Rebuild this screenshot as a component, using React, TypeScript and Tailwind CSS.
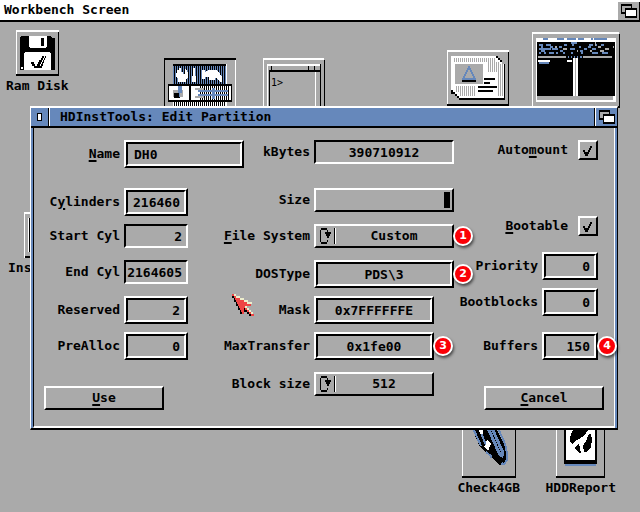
import type { ReactNode } from "react";
import clsx from "clsx";

const raised = "border-2 border-t-white border-l-white border-r-black border-b-black";
const recessed = "border-2 border-t-black border-l-black border-r-white border-b-white";

export default function App() {
  return (
    <div className="flex min-h-screen flex-col overflow-hidden bg-[#aaaaaa] font-['DejaVu_Sans_Mono',monospace] text-[13px] leading-4 font-bold text-black">
      <header className="flex h-[22px] items-center justify-between border-b-2 border-black bg-white pl-1">
        <h1>Workbench Screen</h1>
        <button
          aria-label="Screen depth"
          className="mt-0.5 flex h-[18px] w-[22px] items-center justify-center border-r border-black bg-[#aaaaaa]"
        >
          <DepthIcon />
        </button>
      </header>

      <main className="relative flex-1 pt-21">
        <DesktopIcons />
        <PartitionWindow />
        <Pointer />
      </main>
    </div>
  );
}

function PartitionWindow() {
  return (
    <section className="relative z-10 mr-[22px] ml-[30px] border-t-2 border-r border-b-2 border-l border-t-white border-r-black border-b-black border-l-white bg-[#6688bb]">
      <div className="flex h-5 items-stretch border-b-2 border-black">
        <button
          aria-label="Close"
          className="flex w-[18px] items-center justify-center border-r border-black"
        >
          <span className="h-2 w-[5px] border border-black bg-white" />
        </button>
        <h2 className="flex flex-1 items-center border-r border-l border-r-black border-l-white pl-2.5">
          HDInstTools: Edit Partition
        </h2>
        <button
          aria-label="Window depth"
          className="flex w-[22px] items-center justify-center border-l border-white"
        >
          <DepthIcon />
        </button>
      </div>

      <form
        onSubmit={(e) => e.preventDefault()}
        className="mx-0.5 grid grid-cols-[144px_1fr_144px] border-r border-b-2 border-l border-r-white border-b-white border-l-black bg-[#aaaaaa] px-2.5 pt-3 pb-4"
      >
        <div className="flex flex-col">
          <Row className="h-12" label={<><Key>N</Key>ame</>} id="name">
            <TextField id="name" value="DH0" className="w-[120px]" />
          </Row>
          <Row className="h-9" label={<>C<Key>y</Key>linders</>} id="cylinders">
            <TextField id="cylinders" value="216460" className="w-16" align="right" />
          </Row>
          <Row className="h-9" label="Start Cyl" id="start">
            <ReadOnly id="start" value="2" className="w-16" align="right" />
          </Row>
          <Row className="h-9" label="End Cyl" id="end">
            <ReadOnly id="end" value="2164605" className="w-16" align="right" />
          </Row>
          <Row className="h-9" label="Reserved" id="reserved">
            <TextField id="reserved" value="2" className="w-16" align="right" />
          </Row>
          <Row className="h-9" label="PreAlloc" id="prealloc">
            <TextField id="prealloc" value="0" className="w-16" align="right" />
          </Row>
          <button className={clsx("mt-auto h-6 w-[120px]", raised)}>
            <Key>U</Key>se
          </button>
        </div>

        <div className="flex flex-col pr-1.5 pb-3.5">
          <Row className="h-12" label="kBytes" id="kbytes" wide>
            <ReadOnly id="kbytes" value="390710912" className="w-[140px]" align="center" />
          </Row>
          <Row className="h-9" label="Size" id="size" wide>
            <div className={clsx("flex h-6 w-[140px] justify-end py-0.5 pr-0.5", raised)}>
              <input
                id="size"
                type="range"
                defaultValue="100"
                className="h-4 w-full appearance-none bg-transparent [&::-webkit-slider-thumb]:h-4 [&::-webkit-slider-thumb]:w-1.5 [&::-webkit-slider-thumb]:appearance-none [&::-webkit-slider-thumb]:bg-black"
              />
            </div>
          </Row>
          <Row className="h-9" label={<><Key>F</Key>ile System</>} id="fs" wide>
            <Cycle id="fs" options={["Custom"]} className="w-[140px]" note={1} />
          </Row>
          <Row className="h-9" label="DOSType" id="dostype" wide>
            <TextField id="dostype" value="PDS\3" className="w-[140px]" align="center" note={2} />
          </Row>
          <Row className="h-9" label="Mask" id="mask" wide>
            <TextField id="mask" value="0x7FFFFFFE" className="w-[120px]" align="center" />
          </Row>
          <Row className="h-10" label="MaxTransfer" id="maxtransfer" wide>
            <TextField id="maxtransfer" value="0x1fe00" className="w-[120px]" align="center" note={3} />
          </Row>
          <Row className="h-6" label="Block size" id="blocksize" wide>
            <Cycle id="blocksize" options={["512"]} className="w-[120px]" />
          </Row>
        </div>

        <div className="flex flex-col">
          <div className="flex flex-col pr-1.5">
            <Row className="h-19" label={<>Auto<Key>m</Key>ount</>} id="automount" gap="gap-2.5">
              <Tick id="automount" />
            </Row>
            <Row className="h-9" label={<><Key>B</Key>ootable</>} id="bootable" gap="gap-2.5">
              <Tick id="bootable" />
            </Row>
            <Row className="h-9" label="Priority" id="priority">
              <TextField id="priority" value="0" className="w-14" align="right" />
            </Row>
            <Row className="h-11" label="Bootblocks" id="bootblocks">
              <TextField id="bootblocks" value="0" className="w-14" align="right" />
            </Row>
            <Row className="h-7" label="Buffers" id="buffers">
              <TextField id="buffers" value="150" className="w-14" align="right" note={4} />
            </Row>
          </div>
          <button className={clsx("mt-auto h-6 w-[120px] self-end", raised)}>
            <Key>C</Key>ancel
          </button>
        </div>
      </form>
    </section>
  );
}

// underlined keyboard shortcut letter
function Key({ children }: { children: ReactNode }) {
  return <span className="underline decoration-2 underline-offset-2">{children}</span>;
}

function Row({
  id,
  label,
  className,
  gap = "gap-1",
  wide,
  children,
}: {
  id: string;
  label: ReactNode;
  className: string;
  gap?: string;
  wide?: boolean;
  children: ReactNode;
}) {
  // the wide column keeps all its fields on one left edge
  return (
    <div className={clsx("flex items-start", className, !wide && id !== "name" && "justify-end")}>
      <div className={clsx("flex items-center", gap, wide && "w-full")}>
        <label
          htmlFor={id}
          className={clsx("text-right whitespace-nowrap", wide && "flex-1", id === "name" && "w-19")}
        >
          {label}
        </label>
        {wide ? <div className="w-[140px]">{children}</div> : children}
      </div>
    </div>
  );
}

type Align = "left" | "right" | "center";

const aligns: Record<Align, string> = {
  left: "pl-1.5 text-left",
  right: "pr-1 text-right",
  center: "text-center",
};

function TextField({
  id,
  value,
  className,
  align = "left",
  note,
}: {
  id: string;
  value: string;
  className: string;
  align?: Align;
  note?: number;
}) {
  return (
    <div className={clsx("relative h-7 shrink-0", raised, className)}>
      <input
        id={id}
        defaultValue={value}
        className={clsx("block h-6 w-full outline-none", recessed, aligns[align])}
      />
      {note && <Note n={note} />}
    </div>
  );
}

function ReadOnly({
  id,
  value,
  className,
  align,
}: {
  id: string;
  value: string;
  className: string;
  align: Align;
}) {
  return (
    <input
      id={id}
      readOnly
      value={value}
      className={clsx("block h-6 outline-none", recessed, aligns[align], className)}
    />
  );
}

function Cycle({
  id,
  options,
  className,
  note,
}: {
  id: string;
  options: string[];
  className: string;
  note?: number;
}) {
  return (
    <div className={clsx("relative flex h-6 items-center", raised, className)}>
      <svg width="20" height="16" viewBox="0 0 20 16" shapeRendering="crispEdges" className="shrink-0">
        <path d="M5 0h6v2h-6zM4 2h1v12h-1zM5 14h6v2h-6zM11 12h1v2h-1zM11 2h1v4h-1z" />
        <path d="M9 4h6v2h-1v2h-1v2h-2v-2h-1v-2h-1z" />
        <path d="M18 0h1v16h-1z" />
        <path d="M19 0h1v16h-1z" fill="#fff" />
      </svg>
      <select id={id} className="h-5 w-full appearance-none text-center outline-none [text-align-last:center]">
        {options.map((o) => (
          <option key={o}>{o}</option>
        ))}
      </select>
      {note && <Note n={note} />}
    </div>
  );
}

function Tick({ id }: { id: string }) {
  return (
    <div className={clsx("relative h-5 w-5", raised)}>
      <input id={id} type="checkbox" defaultChecked className="peer block h-4 w-4 appearance-none" />
      <svg
        viewBox="0 0 16 16"
        shapeRendering="crispEdges"
        className="pointer-events-none absolute inset-0 hidden h-4 w-4 peer-checked:block"
      >
        <path d="M10 4h2v2h-2zM9 6h2v2h-2zM3 8h2v2h-2zM8 8h2v2h-2zM4 10h5v2h-5zM5 12h3v2h-3z" />
      </svg>
    </div>
  );
}

function Note({ n }: { n: number }) {
  return (
    <span className="absolute top-1/2 left-full z-10 ml-px flex h-5 w-5 -translate-y-1/2 items-center justify-center rounded-full border-2 border-white bg-[#fb0007] font-['DejaVu_Sans',sans-serif] text-[11px] leading-3 text-white shadow-[1px_2px_3px_rgba(0,0,0,0.6)]">
      {n}
    </span>
  );
}

function DepthIcon() {
  return (
    <svg width="16" height="14" viewBox="0 0 16 14" shapeRendering="crispEdges">
      <path d="M0 0h11v10h-11z" />
      <path d="M1 2h9v6h-9z" fill="#aaa" />
      <path d="M4 4h12v10h-12z" />
      <path d="M5 6h10v6h-10z" fill="#fff" />
    </svg>
  );
}

function Pointer() {
  return (
    <svg
      width="22"
      height="22"
      viewBox="0 0 22 22"
      shapeRendering="crispEdges"
      className="absolute top-[272px] left-[232px] z-20"
    >
      <path
        d="M0 0h2v2h-2zM2 2h2v2h-2zM3 4h5v2h-5zM4 6h8v2h-8zM5 8h10v2h-10zM6 10h13v2h-13zM7 12h6v2h-6zM8 14h4v2h-4zM13 14h2v2h-2zM9 16h3v2h-3zM15 16h2v2h-2zM10 18h2v2h-2zM17 18h2v2h-2zM19 20h3v2h-3z"
        fill="#ee4444"
      />
      <path
        d="M2 0h2v2h-2zM4 2h4v2h-4zM8 4h4v2h-4zM12 6h4v2h-4zM15 8h5v2h-5zM13 12h2v2h-2zM15 14h2v2h-2zM17 16h2v2h-2zM19 18h2v2h-2z"
        fill="#eeeecc"
      />
      <path d="M0 2h2v2h-2zM2 4h1v2h-1zM2 6h2v2h-2zM4 8h1v2h-1zM4 10h2v2h-2zM6 12h1v2h-1zM6 14h2v2h-2zM8 16h1v2h-1zM8 18h2v2h-2zM12 14h1v2h-1zM12 16h3v2h-3zM15 18h2v2h-2zM17 20h2v2h-2z" />
    </svg>
  );
}

function DesktopIcon({ label, className, children }: { label?: string; className: string; children: ReactNode }) {
  return (
    <figure className={clsx("absolute flex flex-col items-center", className)}>
      {children}
      {label && <figcaption className="mt-0.5 whitespace-nowrap">{label}</figcaption>}
    </figure>
  );
}

function DesktopIcons() {
  return (
    <>
      <DesktopIcon label="Ram Disk" className="top-2 left-1.5">
        <svg width="43" height="46" viewBox="0 0 43 46" shapeRendering="crispEdges">
          <Frame w={43} h={46} />
          <path d="M4 8l1-2h30l1 2h3v32h-35z" />
          <path d="M13 6h18v10l-1 2h-16l-1-2zM9 22h24l2 2v16h-27v-16z" fill="#fff" />
          <path d="M25 8h3v8h-3z" />
          <path d="M15 32h3v2h1v2h2v-2h1v-2h1v-2h2v-2h1v-2h2v2h-1v2h-1v2h-1v2h-1v2h-1v2h-5v-2h-2v-2h-1zM23 36h2v-2h1v-2h1v-2h1v-2h1v-2h1v2h-1v2h-1v3h-1v3h-1v2h-3z" />
          <path d="M5 37h2v2h-2z" fill="#fff" />
        </svg>
      </DesktopIcon>

      <DesktopIcon className="top-9 left-[164px]">
        <svg width="72" height="50" viewBox="0 0 72 50" shapeRendering="crispEdges">
          <defs>
            <pattern id="blueStripe" width="2" height="2" patternUnits="userSpaceOnUse">
              <path d="M0 0h2v2h-2z" fill="#6688bb" />
              <path d="M0 0h1v2h-1z" />
            </pattern>
            <pattern id="whiteStripe" width="2" height="2" patternUnits="userSpaceOnUse">
              <path d="M0 0h2v2h-2z" fill="#fff" />
              <path d="M0 0h1v2h-1z" />
            </pattern>
          </defs>
          <path d="M0 0h72v2h-71v48h-1z" />
          <path d="M71 2h1v48h-1z" fill="#fff" />
          <path d="M9 6h53v20h-53z" fill="url(#blueStripe)" />
          <path d="M9 6h53v2h-53z" />
          <path d="M62 6h1v20h-1zM61 44h2v6h-2z" fill="#fff" />
          <path d="M13 12h2v-2h2v4h2v2h2v-5l2 1v2h1v5l-2 2v3h-8v-3l-2-3zM29 10h2v8h1v6h-4v-6h1zM38 12h3v2l4-2h8l3 4 2 3v5h-2l-3-4h-2v2h-6v-3h-4v2h-3z" fill="#fff" />
          <path d="M4 26h64v18h-64z" />
          <path d="M5 28h20v14h-20zM27 28h9v14h-9z" fill="#fff" />
          <path d="M36 28h28v14h-28z" fill="url(#whiteStripe)" />
          <path d="M9 32h10v7h-10z" fill="#aaa" />
          <path d="M10 35h6v5h-6z" />
          <path d="M14 28h4v7h-2v4h-1v-4h-1zM34 32h30v2h-30zM34 36h30v2h-30zM48 30h3v11h-3z" fill="#6688bb" />
          <path d="M31 30h9v2h-9zM31 38h9v2h-9z" fill="#aaa" />
          <path d="M65 28h2v14h-2z" fill="#fff" />
          <path d="M9 44h52v6h-52z" fill="url(#whiteStripe)" />
        </svg>
      </DesktopIcon>

      <DesktopIcon className="top-9 left-[263px]">
        <svg width="62" height="50" viewBox="0 0 62 50" shapeRendering="crispEdges">
          <path d="M0 0h61v2h-60v48h-1zM4 6h53v2h-52v42h-1zM52 14h1v36h-1z" fill="#fff" />
          <path d="M61 2h1v48h-1zM57 6h1v44h-1zM6 12h51v2h-50v36h-1zM8 8h1v4h-1zM45 8h1v4h-1zM51 8h1v4h-1z" />
          <text x="8" y="28" fontSize="10" fontWeight="400">
            1&gt;
          </text>
        </svg>
      </DesktopIcon>

      <DesktopIcon className="top-7 right-[131px]">
        <svg width="62" height="56" viewBox="0 0 62 56" shapeRendering="crispEdges">
          <defs>
            <pattern id="greyStripe" width="2" height="2" patternUnits="userSpaceOnUse">
              <path d="M0 0h2v2h-2z" fill="#fff" />
              <path d="M1 0h1v2h-1z" fill="#aaa" />
            </pattern>
          </defs>
          <Frame w={62} h={56} />
          <path d="M49 6h2v2h2v2h2v4h3v36h-46v-2h-2v-2h-2v-2h-4v-4h50z" />
          <path d="M4 6h45v2h2v2h2v2h2v2h2v34h-45v-2h-2v-2h-2v-2h-2v-2h-2z" fill="#fff" />
          <path d="M7 8h41v4h-41zM40 12h12v10h-12zM8 36h20v10h-16v-4h-4zM50 14h6v32h-6z" fill="url(#greyStripe)" />
          <path d="M8 14h27v20h-27z" fill="#aaa" />
          <path d="M35 14h1v20h-1z" fill="#aaa" />
          <path d="M15 30h14v2h-14z" />
          <path d="M22 17l6 12h-12z" fill="none" stroke="#6688bb" strokeWidth="2" />
          <path d="M37 28h11v2h-11zM37 32h6v2h-6zM31 36h19v2h-19zM31 40h15v2h-15z" />
        </svg>
      </DesktopIcon>

      <DesktopIcon className="top-2.5 right-5">
        <svg width="88" height="76" viewBox="0 0 88 76" shapeRendering="crispEdges">
          <path d="M0 0h87v2h-86v74h-1zM4 6h80v64h-80z" fill="#fff" />
          <path d="M87 2h1v74h-2v-2h1zM5 10h78v54h-78z" />
          <path d="M11 6h5v2h-5zM25 6h7v2h-7zM35 6h9v2h-9zM46 6h6v2h-6zM59 6h2v2h-2zM62 6h13v2h-13z" fill="#6688bb" />
          <path d="M7 12h4v2h-4zM14 12h5v2h-5zM32 12h3v2h-3zM39 10h6v2h-6zM40 12h2v2h-2zM57 12h4v2h-4zM63 12h2v2h-2zM69 12h3v2h-3zM9 14h2v2h-2zM18 14h3v2h-3zM27 14h3v2h-3zM47 14h2v2h-2zM56 14h3v2h-3zM7 16h12v2h-12zM20 16h6v2h-6zM38 16h5v2h-5zM52 16h3v2h-3zM60 16h4v2h-4zM7 20h2v2h-2zM12 20h2v2h-2zM17 20h5v2h-5zM24 20h2v2h-2zM31 20h2v2h-2zM39 20h2v2h-2zM49 20h2v2h-2zM60 20h6v2h-6zM70 20h6v2h-6zM9 18h4v2h-4zM28 18h3v2h-3zM48 18h3v2h-3z" fill="#6688bb" />
          <path d="M23 14h2v2h-2zM31 16h4v2h-4zM63 10h1v4h-1zM66 14h3v2h-3zM73 16h4v2h-4zM58 18h2v2h-2zM68 18h4v2h-4zM81 14h1v2h-1zM45 18h1v2h-1zM6 24h28v2h-28zM51 24h29v2h-29z" fill="#aaa" />
          <path d="M36 24h1v2h-1zM39 24h1v2h-1zM42 24h1v2h-1zM45 24h1v2h-1zM48 24h2v2h-2zM7 30h10v2h-10z" fill="#6688bb" />
          <path d="M6 28h12v2h-12zM35 28h5v2h-5zM41 26h5v38h-5z" fill="#fff" />
          <path d="M43 26h1v38h-1zM5 64h76v4h-76z" fill="#aaa" />
        </svg>
      </DesktopIcon>

      <DesktopIcon className="top-[190px] left-2 items-start">
        <svg width="40" height="46" viewBox="0 0 40 46" shapeRendering="crispEdges">
          <path d="M16 0h24v2h-23v44h-1zM20 6h1v34h-1z" fill="#fff" />
          <path d="M21 6h1v34h-1zM17 44h23v2h-23z" />
        </svg>
        <figcaption className="mt-0.5">Ins</figcaption>
      </DesktopIcon>

      <DesktopIcon label="Check4GB" className="top-[404px] right-[120px]">
        <svg width="54" height="52" viewBox="0 0 54 52" shapeRendering="crispEdges">
          <path d="M0 0h1v50h-1z" fill="#fff" />
          <path d="M53 0h1v52h-54v-2h53z" />
          <path d="M10 2h24l7 14 4 11v8l-3 4h-5l-5-6-7-5-7-7-4-9z" />
          <path d="M11 2l8 18M17 2l9 22M36 2l7 16 2 9v7l-3 4h-3M24 26l5 4v2M40 37l2 1" fill="none" stroke="#6688bb" strokeWidth="2" />
          <path d="M26 2l12 27 2 1 1-3-11-25" fill="none" stroke="#6688bb" strokeWidth="3" />
          <path d="M17 3h4v5h-3zM25 13l4 5-3 7-4-4 2-3z" fill="#fff" />
        </svg>
      </DesktopIcon>

      <DesktopIcon label="HDDReport" className="top-[404px] right-[24px]">
        <svg width="49" height="52" viewBox="0 0 49 52" shapeRendering="crispEdges">
          <path d="M0 0h1v50h-1z" fill="#fff" />
          <path d="M48 0h1v52h-49v-2h48zM8 0h33v38h-33z" />
          <path d="M10 0h29v34h-29z" fill="#fff" />
          <path d="M9 38h31v2h-31z" fill="#6688bb" />
          <path d="M17 4h15l-4 6-7 4-5 4-2-2v-5zM33 8h2l1 5-1 8-4 5h-3l-1-6 3-5zM22 18h1l1 4 1 5h-2l-5-5z" />
        </svg>
      </DesktopIcon>
    </>
  );
}

function Frame({ w, h }: { w: number; h: number }) {
  return (
    <>
      <path d={`M0 0h${w}v2h${1 - w}v${h - 2}h-1z`} fill="#fff" />
      <path d={`M${w - 1} 2h1v${h - 2}h${-w}v-2h${w - 1}z`} />
    </>
  );
}
